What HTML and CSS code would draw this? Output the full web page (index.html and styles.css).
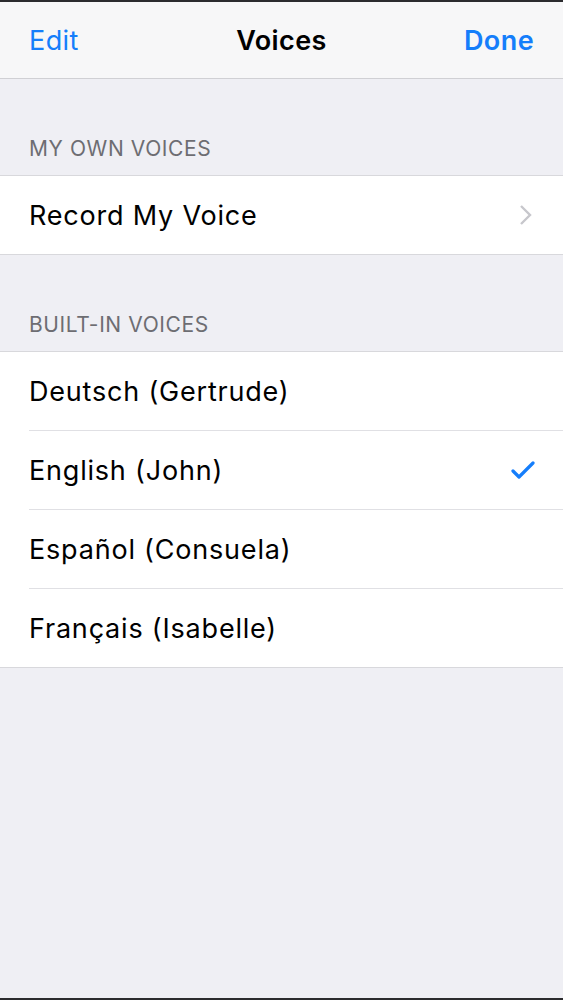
FILE: index.html
```html
<!DOCTYPE html>
<html lang="en">
<head>
    <meta charset="UTF-8">
    <meta name="viewport" content="width=device-width, initial-scale=1.0">
    <title>Voices</title>
    <link rel="stylesheet" href="styles.css">
</head>
<body>
    <div class="screen">
        <header class="navbar">
            <a class="nav-btn">Edit</a>
            <h1 class="nav-title">Voices</h1>
            <a class="nav-btn nav-done">Done</a>
        </header>

        <div class="section-header">MY OWN VOICES</div>
        <ul class="group">
            <li class="row">
                <span>Record My Voice</span>
                <svg class="chevron" width="14" height="22" viewBox="0 0 14 22">
                    <path d="M2 2 L11 11 L2 20" fill="none" stroke="#c7c7cc" stroke-width="2.4"/>
                </svg>
            </li>
        </ul>

        <div class="section-header">BUILT-IN VOICES</div>
        <ul class="group">
            <li class="row">Deutsch (Gertrude)</li>
            <li class="row">
                <span>English (John)</span>
                <svg class="check" width="24" height="20" viewBox="0 0 24 20">
                    <path d="M2 11 L8 17 L22 3" fill="none" stroke="#157efb" stroke-width="3.2" stroke-linecap="round" stroke-linejoin="round"/>
                </svg>
            </li>
            <li class="row">Español (Consuela)</li>
            <li class="row">Français (Isabelle)</li>
        </ul>
    </div>
</body>
</html>
```

FILE: styles.css
```css
body {
    margin: 0;
    font-family: Inter, "Liberation Sans", sans-serif;
    background-color: #2b2b2e;
}
.screen {
    height: 996px;
    margin-top: 2px;
    background-color: #efeff4;
    overflow: hidden;
}
.navbar {
    height: 76px;
    display: flex;
    align-items: center;
    justify-content: space-between;
    padding: 0 29px;
    background-color: #f7f7f8;
    border-bottom: 1px solid #d0d0d4;
}
.nav-btn {
    color: #157efb;
    font-size: 27px;
    letter-spacing: 0.4px;
    width: 90px;
}
.nav-done {
    text-align: right;
    font-weight: 600;
}
.nav-title {
    margin: 0;
    font-size: 27px;
    letter-spacing: 0.4px;
    font-weight: 600;
    color: #000;
}
.section-header {
    padding: 56px 29px 12px;
    font-size: 21px;
    letter-spacing: 0.6px;
    color: #6d6d72;
    line-height: 28px;
}
.group {
    list-style: none;
    margin: 0;
    padding: 0;
    background-color: #fff;
    border-top: 1px solid #d8d8dc;
    border-bottom: 1px solid #d8d8dc;
}
.row {
    height: 78px;
    margin-left: 29px;
    padding-right: 30px;
    display: flex;
    align-items: center;
    justify-content: space-between;
    font-size: 27px;
    letter-spacing: 0.8px;
    color: #000;
    border-bottom: 1px solid #e0e0e4;
}
.row:last-child {
    border-bottom: none;
}
.check {
    margin-right: -2px;
}
```
